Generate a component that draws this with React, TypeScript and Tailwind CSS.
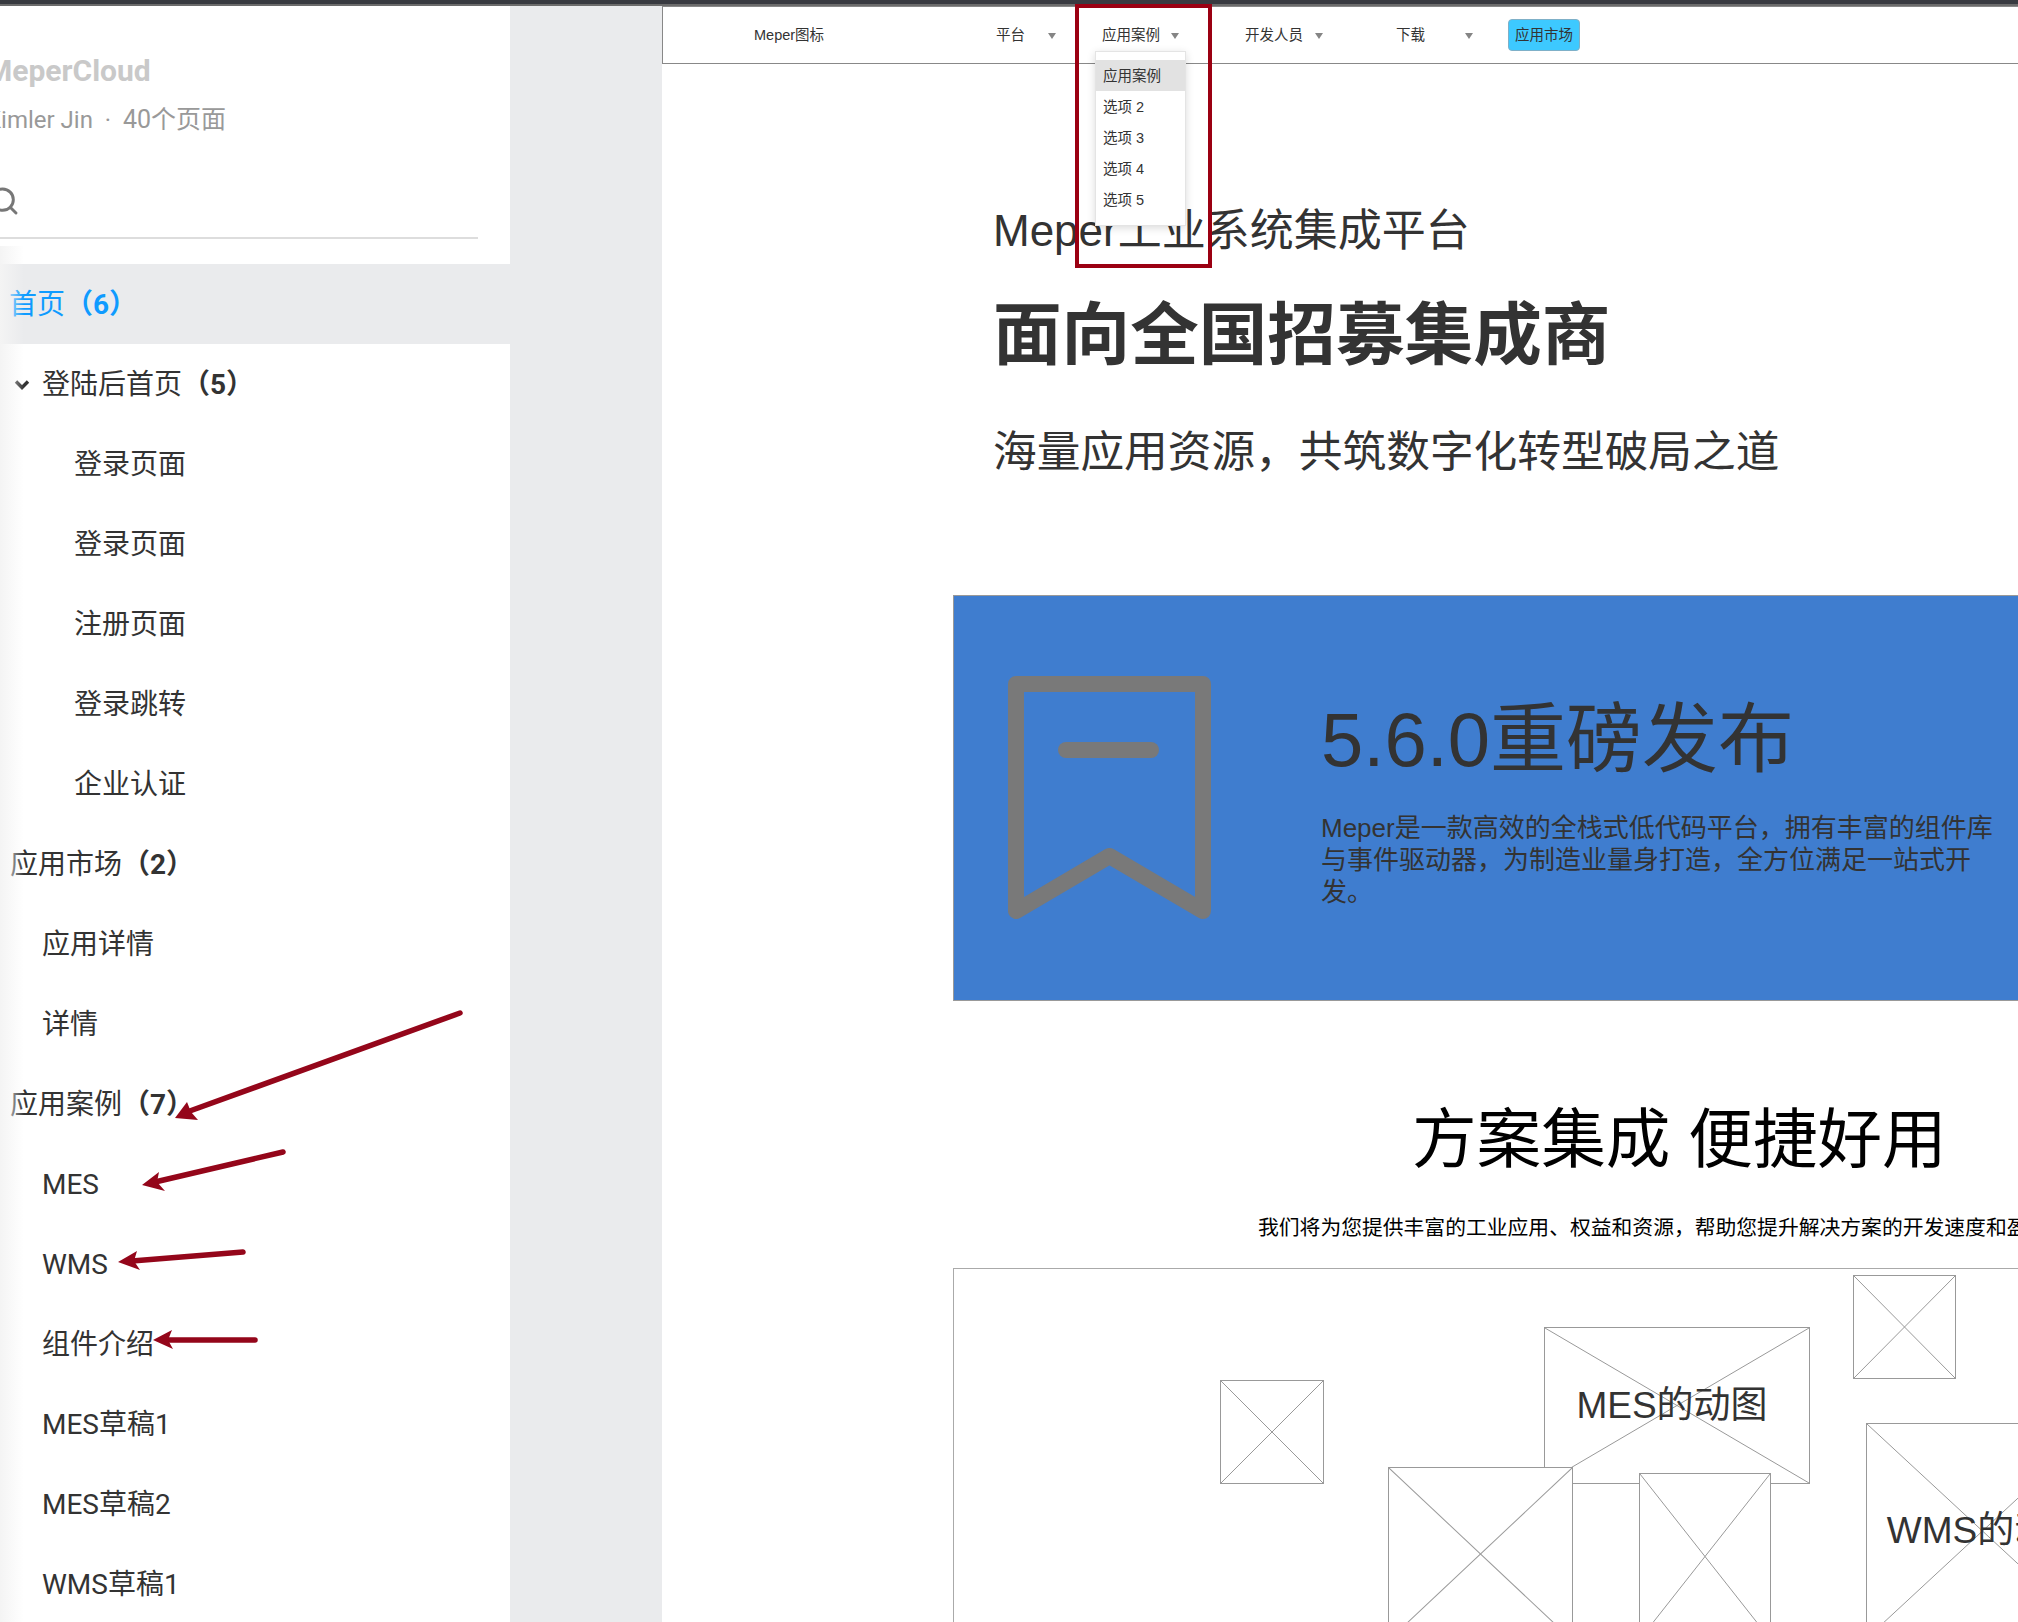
import { Search } from 'lucide-react'

const CN_SANS = "font-['Liberation_Sans','Noto_Sans_CJK_SC',sans-serif]"

const menuRows = [
  { label: '登陆后首页', count: '（5）', indent: 'pl-[42px]', chevron: true },
  { label: '登录页面', indent: 'pl-[74px]' },
  { label: '登录页面', indent: 'pl-[74px]' },
  { label: '注册页面', indent: 'pl-[74px]' },
  { label: '登录跳转', indent: 'pl-[74px]' },
  { label: '企业认证', indent: 'pl-[74px]' },
  { label: '应用市场', count: '（2）', indent: 'pl-[10px]' },
  { label: '应用详情', indent: 'pl-[42px]' },
  { label: '详情', indent: 'pl-[42px]' },
  { label: '应用案例', count: '（7）', indent: 'pl-[10px]' },
  { label: 'MES', indent: 'pl-[42px]' },
  { label: 'WMS', indent: 'pl-[42px]' },
  { label: '组件介绍', indent: 'pl-[42px]' },
  { label: 'MES草稿1', indent: 'pl-[42px]' },
  { label: 'MES草稿2', indent: 'pl-[42px]' },
  { label: 'WMS草稿1', indent: 'pl-[42px]' },
]

const navItems = [
  { label: '平台', width: 'w-[106px]', gap: 'gap-[23px]' },
  { label: '应用案例', width: 'w-[143px]', gap: 'gap-[11px]' },
  { label: '开发人员', width: 'w-[151px]', gap: 'gap-[12px]' },
  { label: '下载', width: 'w-[112px]', gap: 'gap-[40px]' },
]

const dropdownItems = ['应用案例', '选项 2', '选项 3', '选项 4', '选项 5']

function Caret() {
  return (
    <svg width="8" height="6" viewBox="0 0 8 6" className="shrink-0">
      <path d="M0 0 H8 L4 6 Z" fill="#858585" />
    </svg>
  )
}

function Sidebar() {
  return (
    <aside className="relative h-full w-[510px] shrink-0 overflow-hidden bg-white font-['Roboto','Noto_Sans_CJK_SC',sans-serif]">
      <p className="-ml-[14px] mt-[49px] h-[32px] whitespace-nowrap text-[30px] leading-[32px] font-bold text-[#c9c9c9]">
        MeperCloud
      </p>
      <p className="-ml-[14px] mt-[17px] h-[32px] whitespace-nowrap text-[24px] leading-[32px] text-[#999999]">
        Kimler Jin&nbsp;&nbsp;·&nbsp;&nbsp;<span className="text-[25px]">40个页面</span>
      </p>
      <div className="mt-[49px] flex h-[52px] items-start">
        <Search size={32} strokeWidth={2.2} className="-ml-[12px] text-[#777777]" />
      </div>
      <div className="h-[2px] w-[478px] bg-[#dddddd]" />
      <div className="mt-[25px] flex h-[80px] items-center bg-[#eaebed] pt-[2px] pl-[9px] text-[28px] text-[#0f9bff]">
        首页<span className="font-bold">（6）</span>
      </div>
      {menuRows.map((row, i) => (
        <div key={i} className={`relative flex h-[80px] items-center pt-[2px] text-[28px] text-[#333333] ${row.indent}`}>
          {row.chevron && (
            <svg width="16" height="11" viewBox="0 0 16 11" className="absolute top-[35px] left-[14px]">
              <path d="M2 2.5 L8 8.5 L14 2.5" fill="none" stroke="#333333" strokeWidth="3.4" />
            </svg>
          )}
          {row.label}
          {row.count && <span className="font-bold">{row.count}</span>}
        </div>
      ))}
      <div className="absolute top-[240px] bottom-0 left-0 w-[24px] bg-gradient-to-r from-[#f4f4f4] to-transparent" />
    </aside>
  )
}

function TopNav() {
  return (
    <nav className={`flex h-[58px] w-[1400px] items-center border border-[#888888] bg-white pl-[91px] text-[14.5px] text-[#333333] ${CN_SANS}`}>
      <span className="w-[242px] pt-[2px]">Meper图标</span>
      {navItems.map(item => (
        <div key={item.label} className={`flex items-center pt-[2px] ${item.width} ${item.gap}`}>
          <span>{item.label}</span>
          <Caret />
        </div>
      ))}
      <span className="flex h-[32px] w-[72px] items-center justify-center rounded-[4px] border border-[#7fb0c8] bg-[#3dc9ff] pt-[2px]">
        应用市场
      </span>
    </nav>
  )
}

function Placeholder({ className, children }: { className: string; children?: string }) {
  return (
    <div className={`absolute flex items-center justify-center border border-[#999999] bg-white ${className}`}>
      <svg className="absolute inset-0 h-full w-full" viewBox="0 0 100 100" preserveAspectRatio="none">
        <line x1="0" y1="0" x2="100" y2="100" stroke="#999999" strokeWidth="1" vectorEffect="non-scaling-stroke" />
        <line x1="100" y1="0" x2="0" y2="100" stroke="#999999" strokeWidth="1" vectorEffect="non-scaling-stroke" />
      </svg>
      {children && <span className="relative whitespace-nowrap text-[37px] text-[#333333]">{children}</span>}
    </div>
  )
}

function MainPage() {
  return (
    <main className={`h-full min-w-0 flex-1 overflow-hidden bg-white text-[#333333] ${CN_SANS}`}>
      <TopNav />
      <div className="pl-[331px]">
        <h1 className="mt-[137px] whitespace-nowrap text-[44px] leading-[60px] font-normal">Meper工业系统集成平台</h1>
        <h2 className="mt-[35px] whitespace-nowrap text-[68.6px] leading-[80px] font-bold">面向全国招募集成商</h2>
        <h3 className="mt-[46px] whitespace-nowrap text-[43.7px] leading-[60px] font-normal">海量应用资源，共筑数字化转型破局之道</h3>
      </div>

      <section className="mt-[113px] ml-[291px] flex h-[406px] w-[1200px] items-start border border-[#999999] bg-[#3f7dcf] pt-[80px] pl-[54px]">
        <svg width="203" height="243" viewBox="0 0 203 243" className="shrink-0">
          <path d="M8 8 H195 V235 L101.5 180 L8 235 Z" fill="none" stroke="#797979" strokeWidth="16" strokeLinejoin="round" />
          <rect x="50" y="66" width="101" height="16" rx="8" fill="#797979" />
        </svg>
        <div className="ml-[110px] w-[680px] shrink-0">
          <p className="mt-[14px] whitespace-nowrap text-[76px] leading-[100px]">5.6.0重磅发布</p>
          <p className="mt-[22px] text-[26px] leading-[32px]">
            Meper是一款高效的全栈式低代码平台，拥有丰富的组件库与事件驱动器，为制造业量身打造，全方位满足一站式开发。
          </p>
        </div>
      </section>

      <h2 className="mt-[99px] ml-[750px] whitespace-nowrap text-[64.6px] leading-[80px] font-normal text-black">方案集成 便捷好用</h2>
      <p className="mt-[33px] ml-[596px] whitespace-nowrap text-[20.8px] leading-[30px] text-black">
        我们将为您提供丰富的工业应用、权益和资源，帮助您提升解决方案的开发速度和盈利能力
      </p>

      <div className="relative mt-[25px] ml-[291px] h-[420px] w-[1200px] border border-[#aaaaaa]">
        <Placeholder className="top-[111px] left-[266px] h-[104px] w-[104px]" />
        <Placeholder className="top-[58px] left-[590px] h-[157px] w-[266px] pr-[10px]">MES的动图</Placeholder>
        <Placeholder className="top-[6px] left-[899px] h-[104px] w-[103px]" />
        <Placeholder className="top-[198px] left-[434px] h-[174px] w-[185px]" />
        <Placeholder className="top-[204px] left-[685px] h-[167px] w-[132px]" />
        <Placeholder className="top-[154px] left-[912px] h-[216px] w-[233px] pl-[10px]">WMS的动图</Placeholder>
      </div>
    </main>
  )
}

function NavDropdown() {
  return (
    <div className={`absolute top-[51px] left-[1095px] h-[175px] w-[91px] border border-[#e4e4e4] bg-white pt-[8px] text-[14.5px] text-[#333333] shadow-[0_2px_8px_rgba(0,0,0,0.15)] ${CN_SANS}`}>
      {dropdownItems.map((item, i) => (
        <div key={item} className={`flex h-[31px] items-center pt-[3px] pl-[7px] ${i === 0 ? 'bg-[#e2e2e2]' : ''}`}>
          {item}
        </div>
      ))}
    </div>
  )
}

function Annotations() {
  return (
    <>
      <div className="absolute top-[4px] left-[1075px] h-[264px] w-[137px] border-[4px] border-[#9b0012]" />
      <svg className="pointer-events-none absolute top-0 left-0" width="2018" height="1622" viewBox="0 0 2018 1622">
        <g stroke="#94061a" strokeWidth="5.5" strokeLinecap="round" fill="none">
          <path d="M460 1013 L187 1112" />
          <path d="M283 1152 L155 1182" />
          <path d="M243 1252 L132 1261" />
          <path d="M255 1340 L166 1340" />
        </g>
        <g fill="#94061a">
          <polygon points="175,1118 187,1102 191,1112 198,1120" />
          <polygon points="142,1185 159,1172 157,1182 165,1191" />
          <polygon points="118,1262 137,1251 134,1261 140,1270" />
          <polygon points="153,1340 172,1330 168,1340 173,1349" />
        </g>
      </svg>
    </>
  )
}

export default function App() {
  return (
    <div className="relative h-[1622px] w-[2018px] overflow-hidden bg-[#eaebed]">
      <div className="h-[6px] border-b-2 border-[#6b6b6b] bg-[#383a40]" />
      <div className="flex h-[1616px]">
        <Sidebar />
        <div className="w-[152px] shrink-0 bg-[#eaebed]" />
        <MainPage />
      </div>
      <NavDropdown />
      <Annotations />
    </div>
  )
}
